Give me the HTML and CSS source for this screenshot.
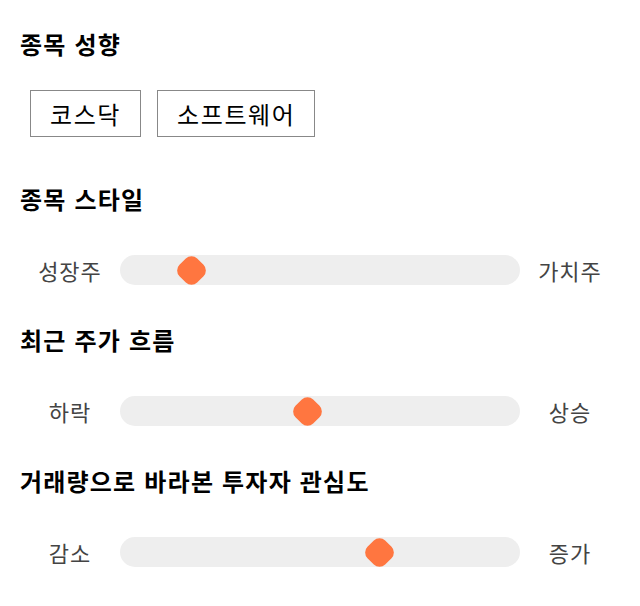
FILE: index.html
```html
<!DOCTYPE html>
<html lang="ko">
<head>
    <meta charset="UTF-8">
    <meta name="viewport" content="width=device-width, initial-scale=1.0">
    <title>종목 성향</title>
    <link rel="stylesheet" href="styles.css">
</head>
<body>

<div class="panel">
    <h2 class="section-title">종목 성향</h2>
    <div class="tags">
        <span class="tag">코스닥</span>
        <span class="tag">소프트웨어</span>
    </div>

    <h2 class="section-title">종목 스타일</h2>
    <div class="scale">
        <span class="scale-label">성장주</span>
        <div class="track">
            <span class="thumb" style="left: 14%"></span>
        </div>
        <span class="scale-label">가치주</span>
    </div>

    <h2 class="section-title">최근 주가 흐름</h2>
    <div class="scale">
        <span class="scale-label">하락</span>
        <div class="track">
            <span class="thumb" style="left: 43%"></span>
        </div>
        <span class="scale-label">상승</span>
    </div>

    <h2 class="section-title">거래량으로 바라본 투자자 관심도</h2>
    <div class="scale">
        <span class="scale-label">감소</span>
        <div class="track">
            <span class="thumb" style="left: 61%"></span>
        </div>
        <span class="scale-label">증가</span>
    </div>
</div>

</body>
</html>
```

FILE: styles.css
```css
body {
    margin: 0;
    font-family: "Noto Sans CJK KR", "Noto Sans", sans-serif;
    color: #000;
    background: #fff;
}

.panel {
    width: 600px;
    padding: 27px 20px 17px;
}

.section-title {
    margin: 0;
    font-size: 24px;
    font-weight: bold;
    line-height: 34px;
    letter-spacing: 1.2px;
}

.tags {
    display: flex;
    gap: 16px;
    margin: 29px 0 45px 10px;
}

.tag {
    padding: 0 19px;
    height: 45px;
    line-height: 45px;
    border: 1px solid #888;
    font-size: 24px;
    letter-spacing: 1.6px;
}

.scale {
    display: flex;
    align-items: center;
    margin: 39px 0 38px;
}

.scale-label {
    width: 100px;
    text-align: center;
    font-size: 22px;
    line-height: 30px;
    letter-spacing: 1px;
    color: #444;
}

.track {
    position: relative;
    flex: 1;
    height: 30px;
    border-radius: 15px;
    background-color: #eeeeee;
}

/* 주황색 마름모 손잡이 */
.thumb {
    position: absolute;
    top: 2.5px;
    left: 0;
    width: 25px;
    height: 25px;
    margin-left: 2.5px;
    border-radius: 8px;
    background-color: #ff7640;
    transform: rotate(45deg);
}
```
